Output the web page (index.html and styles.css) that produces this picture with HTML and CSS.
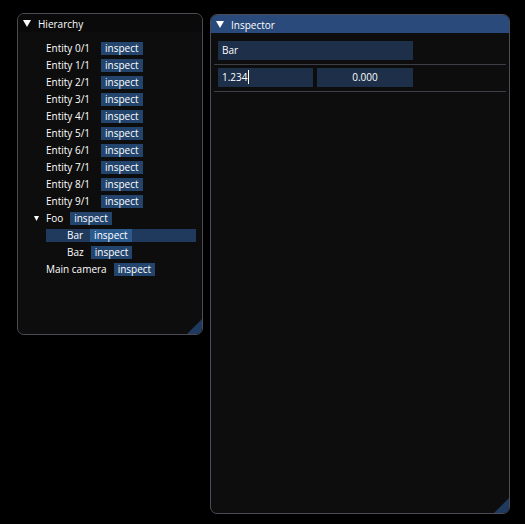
FILE: index.html
```html
<!DOCTYPE html>
<html lang="en">
<head>
    <meta charset="UTF-8">
    <meta name="viewport" content="width=device-width, initial-scale=1.0">
    <title>Hierarchy / Inspector</title>
    <link rel="stylesheet" href="styles.css">
</head>
<body>

<div class="desktop">

    <div class="window hierarchy">
        <div class="titlebar">
            <svg class="arrow" width="8" height="7" viewBox="0 0 8 7"><polygon points="0,0 8,0 4,7" fill="#fff"/></svg>
            <span>Hierarchy</span>
        </div>
        <div class="tree">
            <div class="node"><span class="label entity">Entity 0/1</span><span class="btn">inspect</span></div>
            <div class="node"><span class="label entity">Entity 1/1</span><span class="btn">inspect</span></div>
            <div class="node"><span class="label entity">Entity 2/1</span><span class="btn">inspect</span></div>
            <div class="node"><span class="label entity">Entity 3/1</span><span class="btn">inspect</span></div>
            <div class="node"><span class="label entity">Entity 4/1</span><span class="btn">inspect</span></div>
            <div class="node"><span class="label entity">Entity 5/1</span><span class="btn">inspect</span></div>
            <div class="node"><span class="label entity">Entity 6/1</span><span class="btn">inspect</span></div>
            <div class="node"><span class="label entity">Entity 7/1</span><span class="btn">inspect</span></div>
            <div class="node"><span class="label entity">Entity 8/1</span><span class="btn">inspect</span></div>
            <div class="node"><span class="label entity">Entity 9/1</span><span class="btn">inspect</span></div>
            <div class="node open">
                <svg class="node-arrow" width="5" height="5" viewBox="0 0 5 5"><polygon points="0,0 5,0 2.5,5" fill="#fff"/></svg>
                <span class="label">Foo</span><span class="btn">inspect</span>
            </div>
            <div class="node child selected"><span class="label">Bar</span><span class="btn">inspect</span></div>
            <div class="node child"><span class="label">Baz</span><span class="btn">inspect</span></div>
            <div class="node"><span class="label">Main camera</span><span class="btn">inspect</span></div>
        </div>
        <div class="grip"></div>
    </div>

    <div class="window inspector">
        <div class="titlebar active">
            <svg class="arrow" width="8" height="7" viewBox="0 0 8 7"><polygon points="0,0 8,0 4,7" fill="#fff"/></svg>
            <span>Inspector</span>
        </div>
        <div class="props">
            <div class="field-row">
                <div class="field wide">Bar</div>
            </div>
            <div class="separator"></div>
            <div class="field-row">
                <div class="field half"><span class="caret">1.234</span></div>
                <div class="field half center">0.000</div>
            </div>
            <div class="separator"></div>
        </div>
        <div class="grip"></div>
    </div>

</div>

</body>
</html>
```

FILE: styles.css
```css
body {
    margin: 0;
    background-color: #000;
    color: #fff;
    font-family: "Open Sans", "DejaVu Sans", sans-serif;
    font-size: 10px;
}
.desktop {
    display: flex;
    align-items: flex-start;
    gap: 7px;
    padding: 13px 0 0 17px;
}
.window {
    position: relative;
    box-sizing: border-box;
    display: flex;
    flex-direction: column;
    border: 1px solid #4b4b55;
    border-radius: 7px;
    background-color: #0d0d0d;
    overflow: hidden;
}
.hierarchy {
    width: 186px;
    height: 322px;
}
.inspector {
    width: 300px;
    height: 500px;
    margin-top: 1px;
}
.titlebar {
    height: 18px;
    display: flex;
    align-items: center;
    gap: 7px;
    padding-left: 5px;
    background-color: #0a0a0a;
}
.titlebar.active {
    background-color: #294a7a;
}
.titlebar span {
    line-height: 18px;
    padding-top: 1px;
}
.arrow {
    display: block;
}

/* hierarchy tree */
.tree {
    display: flex;
    flex-direction: column;
    gap: 4px;
    padding-top: 10px;
}
.node {
    position: relative;
    display: flex;
    align-items: center;
    height: 13px;
    line-height: 13px;
    padding-left: 28px;
}
.node-arrow {
    position: absolute;
    left: 16px;
    top: 4px;
}
.node.child {
    margin-left: 28px;
    padding-left: 21px;
}
.node.selected {
    margin-right: 6px;
    background-color: #1f3a5c;
}
.label {
    margin-right: 7px;
    white-space: nowrap;
}
.label.entity {
    width: 48px;
}
.btn {
    padding: 0 4px;
    background-color: #23456d;
}
.selected .btn {
    background-color: #2b5a8f;
}

/* inspector */
.props {
    display: flex;
    flex-direction: column;
    padding: 8px 3px 0;
}
.field-row {
    display: flex;
    gap: 4px;
    padding-left: 4px;
}
.field {
    box-sizing: border-box;
    height: 19px;
    line-height: 19px;
    padding-left: 4px;
    background-color: #1d2f49;
}
.field.wide {
    width: 195px;
}
.field.half {
    width: 95px;
}
.field.half.center {
    width: 96px;
    padding-left: 0;
    text-align: center;
}
.caret {
    border-right: 1px solid #fff;
}
.separator {
    height: 1px;
    margin: 4px 0 3px;
    background-color: #3e3e46;
}
.separator:last-child {
    margin-bottom: 0;
}

.grip {
    position: absolute;
    right: 0;
    bottom: 0;
    width: 15px;
    height: 15px;
    background-color: #1f3a5e;
    clip-path: polygon(100% 0, 100% 100%, 0 100%);
}
```
